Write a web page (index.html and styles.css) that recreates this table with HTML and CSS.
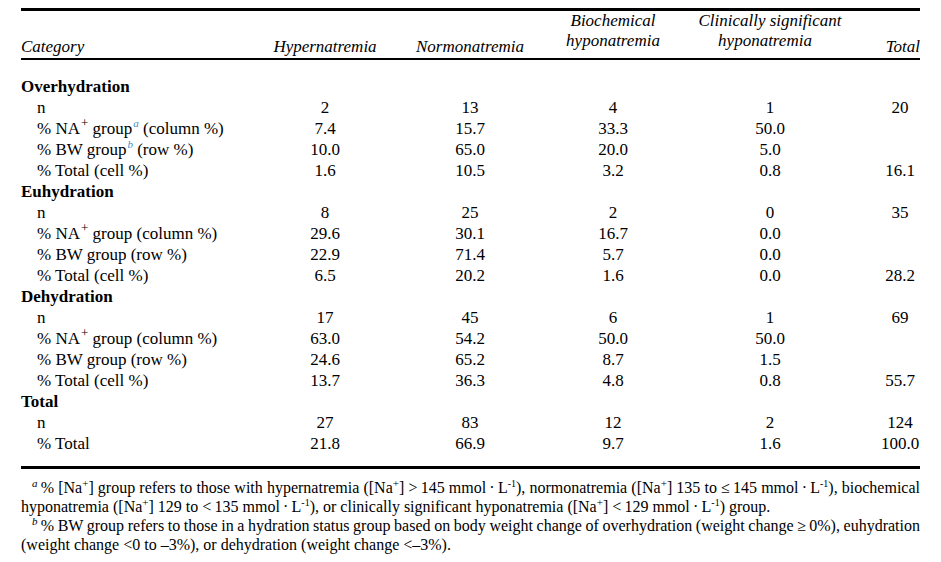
FILE: index.html
```html
<!DOCTYPE html>
<html lang="en">
<head>
<meta charset="utf-8">
<title>Hydration and sodium table</title>
<link rel="stylesheet" href="styles.css">
</head>
<body>
<div class="page">
  <table class="tbl">
    <colgroup>
      <col class="c-label">
      <col class="c-hyper">
      <col class="c-normo">
      <col class="c-bio">
      <col class="c-clin">
      <col class="c-total">
    </colgroup>
    <thead>
      <tr>
        <th class="h-cat"><span class="ul">Category</span></th>
        <th class="h-one">Hypernatremia</th>
        <th class="h-one">Normonatremia</th>
        <th class="h-two">Biochemical<br>hyponatremia</th>
        <th class="h-two"><span class="l1">Clinically significant</span><br><span class="l2">hyponatremia</span></th>
        <th class="h-tot">Total</th>
      </tr>
    </thead>
    <tbody>
      <tr class="grp first"><td>Overhydration</td><td></td><td></td><td></td><td></td><td></td></tr>
      <tr><td class="lab">n</td><td>2</td><td>13</td><td>4</td><td>1</td><td class="tv">20</td></tr>
      <tr><td class="lab">% NA<sup class="pl">+</sup> group<sup class="fr">a</sup> (column %)</td><td>7.4</td><td>15.7</td><td>33.3</td><td>50.0</td><td class="tv"></td></tr>
      <tr><td class="lab">% BW group<sup class="fr">b</sup> (row %)</td><td>10.0</td><td>65.0</td><td>20.0</td><td>5.0</td><td class="tv"></td></tr>
      <tr><td class="lab">% Total (cell %)</td><td>1.6</td><td>10.5</td><td>3.2</td><td>0.8</td><td class="tv">16.1</td></tr>

      <tr class="grp"><td>Euhydration</td><td></td><td></td><td></td><td></td><td></td></tr>
      <tr><td class="lab">n</td><td>8</td><td>25</td><td>2</td><td>0</td><td class="tv">35</td></tr>
      <tr><td class="lab">% NA<sup class="pl">+</sup> group (column %)</td><td>29.6</td><td>30.1</td><td>16.7</td><td>0.0</td><td class="tv"></td></tr>
      <tr><td class="lab">% BW group (row %)</td><td>22.9</td><td>71.4</td><td>5.7</td><td>0.0</td><td class="tv"></td></tr>
      <tr><td class="lab">% Total (cell %)</td><td>6.5</td><td>20.2</td><td>1.6</td><td>0.0</td><td class="tv">28.2</td></tr>

      <tr class="grp"><td>Dehydration</td><td></td><td></td><td></td><td></td><td></td></tr>
      <tr><td class="lab">n</td><td>17</td><td>45</td><td>6</td><td>1</td><td class="tv">69</td></tr>
      <tr><td class="lab">% NA<sup class="pl">+</sup> group (column %)</td><td>63.0</td><td>54.2</td><td>50.0</td><td>50.0</td><td class="tv"></td></tr>
      <tr><td class="lab">% BW group (row %)</td><td>24.6</td><td>65.2</td><td>8.7</td><td>1.5</td><td class="tv"></td></tr>
      <tr><td class="lab">% Total (cell %)</td><td>13.7</td><td>36.3</td><td>4.8</td><td>0.8</td><td class="tv">55.7</td></tr>

      <tr class="grp"><td>Total</td><td></td><td></td><td></td><td></td><td></td></tr>
      <tr><td class="lab">n</td><td>27</td><td>83</td><td>12</td><td>2</td><td class="tv">124</td></tr>
      <tr class="last"><td class="lab">% Total</td><td>21.8</td><td>66.9</td><td>9.7</td><td>1.6</td><td class="tv">100.0</td></tr>
    </tbody>
  </table>

  <div class="notes">
    <div class="fl just ind"><sup class="fm">a</sup>&#8201;% [Na<sup class="pl2">+</sup>] group refers to those with hypernatremia ([Na<sup class="pl2">+</sup>] &gt;&#8201;145 mmol&#8201;·&#8201;L<sup class="m1">-1</sup>), normonatremia ([Na<sup class="pl2">+</sup>] 135 to &le;&#8201;145 mmol&#8201;·&#8201;L<sup class="m1">-1</sup>), biochemical</div>
    <div class="fl">hyponatremia ([Na<sup class="pl2">+</sup>] 129 to &lt;&#8201;135 mmol&#8201;·&#8201;L<sup class="m1">-1</sup>), or clinically significant hyponatremia ([Na<sup class="pl2">+</sup>] &lt;&#8201;129 mmol&#8201;·&#8201;L<sup class="m1">-1</sup>) group.</div>
    <div class="fl just ind"><sup class="fm">b</sup>&#8201;% BW group refers to those in a hydration status group based on body weight change of overhydration (weight change &ge;&#8201;0%), euhydration</div>
    <div class="fl">(weight change &lt;0 to &ndash;3%), or dehydration (weight change &lt;&ndash;3%).</div>
  </div>
</div>
</body>
</html>
```

FILE: styles.css
```css
html, body {
  margin: 0;
  padding: 0;
  background: #ffffff;
}

body {
  font-family: "Liberation Serif", "Times New Roman", serif;
  color: #000000;
}

.page {
  width: 899px;
  margin: 8px 0 0 21px;
}

.tbl {
  width: 899px;
  table-layout: fixed;
  border-collapse: collapse;
  font-size: 17px;
}

.c-label { width: 231px; }
.c-hyper { width: 146px; }
.c-normo { width: 144px; }
.c-bio { width: 142px; }
.c-clin { width: 172px; }
.c-total { width: 64px; }

.tbl thead tr {
  border-top: 3px solid #000000;
  border-bottom: 2px solid #000000;
}

.tbl th {
  font-weight: normal;
  font-style: italic;
  line-height: 20px;
  padding: 0;
  height: 46px;
  box-sizing: border-box;
  text-align: center;
  white-space: nowrap;
}

.tbl th.h-cat {
  text-align: left;
  vertical-align: bottom;
  padding-bottom: 1px;
}

.tbl th.h-one {
  vertical-align: bottom;
  padding-bottom: 1px;
}

.tbl th.h-two {
  vertical-align: bottom;
  padding-bottom: 7px;
}

.tbl th.h-two .l2 {
  display: inline-block;
  margin-right: 10px;
}

.tbl th.h-tot {
  text-align: right;
  vertical-align: bottom;
  padding-bottom: 1px;
}

.tbl td {
  padding: 0;
  line-height: 21px;
  height: 21px;
  text-align: center;
  white-space: nowrap;
}

.tbl td.lab {
  text-align: left;
  padding-left: 16px;
}

.tbl td.tv {
  text-align: center;
  padding-left: 24px;
}

.tbl tr.grp td:first-child {
  text-align: left;
  font-weight: bold;
}

.tbl tr.first td {
  padding-top: 16px;
}

.tbl tr.last {
  border-bottom: 3px solid #000000;
}

.tbl tr.last td {
  padding-bottom: 12px;
}

sup {
  line-height: 0;
  vertical-align: baseline;
  position: relative;
}

sup.pl {
  font-size: 13px;
  top: -7px;
  margin-left: 1px;
}

sup.fr {
  font-size: 11px;
  font-style: italic;
  color: #3a8fc8;
  top: -7px;
  margin-left: 1px;
}

.notes {
  margin-top: 9px;
  font-size: 16px;
  line-height: 19px;
}

.fl {
  white-space: nowrap;
}

.fl.just {
  white-space: normal;
  text-align: justify;
  text-align-last: justify;
  word-spacing: -2px;
}

.fl.ind {
  padding-left: 11px;
}

sup.fm {
  font-size: 11px;
  font-style: italic;
  top: -6px;
}

sup.pl2 {
  font-size: 11px;
  top: -6px;
}

sup.m1 {
  font-size: 10px;
  top: -6px;
}
```
